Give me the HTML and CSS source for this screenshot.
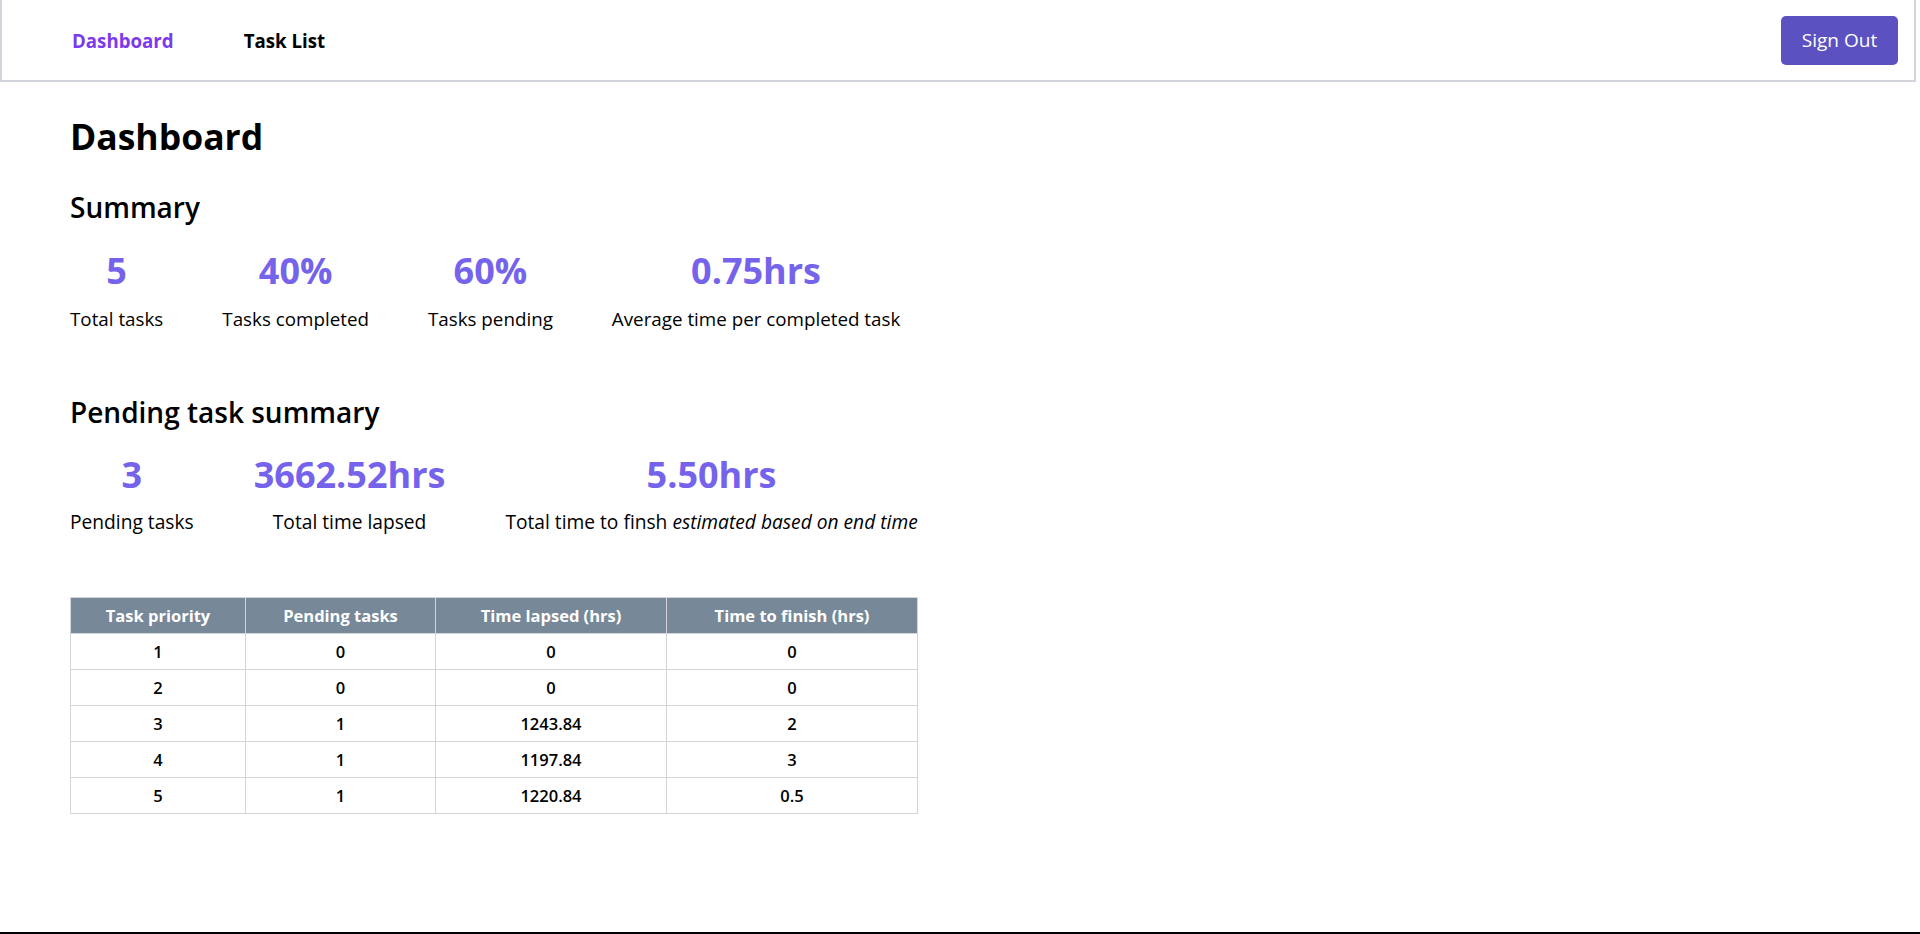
FILE: index.html
```html
<!DOCTYPE html>
<html lang="en">
<head>
<meta charset="utf-8">
<title>Dashboard</title>
<link rel="stylesheet" href="styles.css">
</head>
<body>
<nav class="navbar">
  <div class="nav-links">
    <a class="nav-link active" href="#">Dashboard</a>
    <a class="nav-link" href="#">Task List</a>
  </div>
  <button class="signout" type="button">Sign Out</button>
</nav>
<main class="content">
  <h1 class="page-title">Dashboard</h1>

  <h2 class="section-title">Summary</h2>
  <div class="stats stats-summary">
    <div class="stat"><div class="stat-value">5</div><div class="stat-label">Total tasks</div></div>
    <div class="stat"><div class="stat-value">40%</div><div class="stat-label">Tasks completed</div></div>
    <div class="stat"><div class="stat-value">60%</div><div class="stat-label">Tasks pending</div></div>
    <div class="stat"><div class="stat-value">0.75hrs</div><div class="stat-label">Average time per completed task</div></div>
  </div>

  <h2 class="section-title section-gap">Pending task summary</h2>
  <div class="pending-block">
    <div class="stats stats-pending">
      <div class="stat"><div class="stat-value">3</div><div class="stat-label">Pending tasks</div></div>
      <div class="stat"><div class="stat-value">3662.52hrs</div><div class="stat-label">Total time lapsed</div></div>
      <div class="stat"><div class="stat-value">5.50hrs</div><div class="stat-label">Total time to finsh <em>estimated based on end time</em></div></div>
    </div>

    <table class="priority-table">
      <colgroup>
        <col class="c1"><col class="c2"><col class="c3"><col class="c4">
      </colgroup>
      <thead>
        <tr><th>Task priority</th><th>Pending tasks</th><th>Time lapsed (hrs)</th><th>Time to finish (hrs)</th></tr>
      </thead>
      <tbody>
        <tr><td>1</td><td>0</td><td>0</td><td>0</td></tr>
        <tr><td>2</td><td>0</td><td>0</td><td>0</td></tr>
        <tr><td>3</td><td>1</td><td>1243.84</td><td>2</td></tr>
        <tr><td>4</td><td>1</td><td>1197.84</td><td>3</td></tr>
        <tr><td>5</td><td>1</td><td>1220.84</td><td>0.5</td></tr>
      </tbody>
    </table>
  </div>
</main>
</body>
</html>
```

FILE: styles.css
```css
* { box-sizing: border-box; }

html, body { margin: 0; padding: 0; }

body {
  font-family: "Open Sans", "Noto Sans", sans-serif;
  color: #000;
  background: #fff;
  min-height: 100vh;
  border-bottom: 2px solid #000;
}

.navbar {
  display: flex;
  align-items: center;
  justify-content: space-between;
  height: 82px;
  margin-right: 4px;
  padding: 0 16px 0 70px;
  border-left: 2px solid #d1d5db;
  border-right: 2px solid #d1d5db;
  border-bottom: 2px solid #d1d5db;
}

.nav-links {
  display: flex;
  gap: 70px;
}

.nav-link {
  font-size: 18.7px;
  font-weight: 700;
  color: #000;
  text-decoration: none;
}

.nav-link.active { color: #7c3aed; }

.signout {
  width: 117px;
  height: 49px;
  border: none;
  border-radius: 5px;
  background: #5b51c1;
  color: #fff;
  font-family: inherit;
  font-size: 19px;
  font-weight: 400;
  cursor: pointer;
}

.content {
  padding: 0 0 0 70px;
}

.page-title {
  margin: 30px 0 0;
  font-size: 35.5px;
  line-height: 48px;
  font-weight: 700;
}

.section-title {
  margin: 29px 0 0;
  font-size: 28px;
  line-height: 36px;
  font-weight: 600;
}

.section-title.section-gap { margin-top: 62px; }

.stats {
  display: flex;
  gap: 61px;
  margin-top: 22px;
}

.stats-summary { gap: 59px; }

.stats-pending { margin-top: 21px; gap: 60px; }

.stat {
  display: flex;
  flex-direction: column;
  align-items: center;
}

.stat-value {
  font-size: 36px;
  line-height: 48px;
  font-weight: 700;
  color: #7563ec;
}

.stat-label {
  margin-top: 11px;
  font-size: 18.8px;
  line-height: 26px;
  white-space: nowrap;
}

.stats-pending .stat-label { margin-top: 10px; font-size: 19.2px; }

.pending-block {
  display: inline-block;
}

.priority-table {
  margin-top: 62px;
  border-collapse: collapse;
  table-layout: fixed;
  width: 847px;
  font-size: 16.5px;
}

.priority-table .c1 { width: 175px; }
.priority-table .c2 { width: 190px; }
.priority-table .c3 { width: 231px; }
.priority-table .c4 { width: 251px; }

.priority-table th,
.priority-table td {
  height: 36px;
  padding: 0 8px;
  text-align: center;
  border: 1px solid #d4d4dc;
}

.priority-table th {
  background: #778899;
  color: #fff;
  font-weight: 700;
}

.priority-table td {
  font-weight: 600;
  color: #000;
}
```
